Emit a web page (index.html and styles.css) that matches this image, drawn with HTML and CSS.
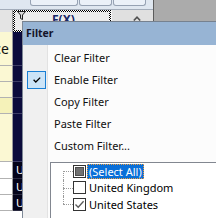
FILE: index.html
```html
<!DOCTYPE html>
<html>
<head>
<meta charset="utf-8">
<link rel="stylesheet" href="styles.css">
</head>
<body>
<div class="app">
  <div class="left">
    <div class="toolbar">
      <span class="tbtn w48"></span><span class="tbtn w33"></span><span class="tbtn w33"></span>
    </div>
    <div class="hdr">
      <div class="ca hcell"></div>
      <div class="hsel">
        <svg class="funnel" width="9" height="9" viewBox="0 0 9 9"><path d="M0.5 0.5 H8.5 L5.5 4 V8.5 L3.5 7.5 V4 Z" fill="#d8d8d8" stroke="#1e1e1e" stroke-width="1"/></svg>
        <span class="fx">F(X)</span>
      </div>
      <div class="hc"><svg width="8" height="5" viewBox="0 0 8 5"><path d="M0.8 4.5 L4 1.2 L7.2 4.5" fill="none" stroke="#505050" stroke-width="1.6"/></svg></div>
    </div>
    <div class="row h34"><div class="ca yel txt"><span>Balance</span></div><div class="cb nav"></div><div class="cc"></div></div>
    <div class="row h16"><div class="ca yel"></div><div class="cb nav"></div><div class="cc"></div></div>
    <div class="row h16"><div class="ca yel"></div><div class="cb nav"></div><div class="cc"></div></div>
    <div class="row h16"><div class="ca yel2"></div><div class="cb nav"></div><div class="cc"></div></div>
    <div class="row h48"><div class="ca yel"></div><div class="cb nav"></div><div class="cc"></div></div>
    <div class="row h17"><div class="ca"></div><div class="cb dark"><span class="clip">United Kingdom</span></div><div class="cc"></div></div>
    <div class="row h16"><div class="ca"></div><div class="cb dark"><span class="clip">United States</span></div><div class="cc"></div></div>
    <div class="row h16"><div class="ca"></div><div class="cb dark"><span class="clip">United States</span></div><div class="cc"></div></div>
  </div>
  <div class="rest"></div>
</div>

<div class="popup">
  <div class="ptitle">Filter</div>
  <div class="pbody">
    <div class="gutter">
      <div class="gslot"></div>
      <div class="gslot"><span class="mcheck"><svg width="8" height="6" viewBox="0 0 8 6"><path d="M0.6 2.8 L2.8 5 L7.2 0.6" fill="none" stroke="#000" stroke-width="1.3"/></svg></span></div>
      <div class="gslot"></div>
      <div class="gslot"></div>
      <div class="gslot"></div>
    </div>
    <div class="pcontent">
      <div class="mi">Clear Filter</div>
      <div class="mi">Enable Filter</div>
      <div class="mi">Copy Filter</div>
      <div class="mi">Paste Filter</div>
      <div class="mi">Custom Filter...</div>
      <div class="listbox">
        <div class="li first"><span class="tl"></span><span class="cbx"><span class="ind"></span></span><span class="lbl sel">(Select All)</span></div>
        <div class="li"><span class="tl"></span><span class="cbx"></span><span class="lbl">United Kingdom</span></div>
        <div class="li last"><span class="tl"></span><span class="cbx"><svg width="11" height="11" viewBox="0 0 11 11"><path d="M1.5 5.5 L4.2 8.3 L9.6 2.2" fill="none" stroke="#5a5a5a" stroke-width="1.3"/></svg></span><span class="lbl">United States</span></div>
      </div>
    </div>
  </div>
</div>
</body>
</html>
```

FILE: styles.css
```css
* { box-sizing: border-box; margin: 0; padding: 0; }
html, body { width: 216px; height: 218px; overflow: hidden; }
body {
  position: relative;
  background: #ababab;
  font-family: "Noto Sans", "Liberation Sans", sans-serif;
  font-size: 11px;
  color: #000;
}
.app { display: flex; height: 218px; }
.left {
  width: 154px;
  height: 218px;
  border-right: 1px solid #5c5c5c;
  background: #fff;
  display: flex;
  flex-direction: column;
  overflow: hidden;
}
.rest { flex: 1; background: #ababab; }

.toolbar {
  height: 10px;
  flex: none;
  border-bottom: 1px solid #a3adba;
  background: #dfe7f0;
  display: flex;
  gap: 1px;
  padding-left: 30px;
  align-items: flex-start;
}
.tbtn {
  height: 6px;
  border: 1px solid #96a2b3;
  border-top: none;
  border-radius: 0 0 3px 3px;
  background: #ebf1f8;
}
.w48 { width: 48px; }
.w33 { width: 33px; }

.hdr { display: flex; height: 22px; flex: none; }
.hcell { background: #e4e4e4; }
.hsel {
  width: 98px;
  display: flex;
  align-items: flex-start;
  border: 2px solid transparent;
  background:
    linear-gradient(#ebebeb, #ebebeb) padding-box,
    repeating-conic-gradient(#000 0 25%, #fff 0 50%) 0 0 / 2px 2px border-box;
}
.funnel { margin: -1px 0 0 2px; flex: none; }
.fx {
  margin: 2px 0 0 26px;
  font-weight: bold;
  font-size: 12px;
  line-height: 12px;
  color: #1c2a6a;
}
.hc {
  width: 42px;
  background: #e0e0e0;
  border-left: 1px solid #f8f8f8;
  padding: 6px 0 0 21px;
  display: flex;
  align-items: flex-start;
}

.row { display: flex; flex: none; }
.h34 { height: 34px; }
.h16 { height: 16px; }
.h17 { height: 17px; }
.h48 { height: 48px; }
.ca {
  width: 13px;
  flex: none;
  border-right: 1px solid #9a9a9a;
  border-bottom: 1px solid #b2b2b2;
  background: #fff;
}
.hdr .ca { border-bottom: none; background: #e4e4e4; }
.yel { background: #fbf8d3; }
.yel2 { background: #f5f2b9; }
.txt {
  display: flex;
  justify-content: flex-end;
  align-items: center;
  overflow: hidden;
  padding-right: 3px;
  font-size: 14px;
  white-space: nowrap;
  color: #111;
}
.cb {
  width: 98px;
  flex: none;
  border-bottom: 1px solid #3e3e66;
}
.nav { background: #0c0c3c; }
.dark {
  background: #03031a;
  border-bottom-color: #2a2a40;
  color: #fff;
  padding-left: 3px;
  font-size: 11px;
  line-height: 15px;
}
.clip {
  display: block;
  width: 6px;
  overflow: hidden;
  white-space: nowrap;
}
.cc { width: 42px; flex: none; border-bottom: 1px solid #c8c8c8; }

/* popup menu */
.popup {
  position: absolute;
  left: 22px;
  top: 21px;
  right: 0;
  bottom: 0;
  border-top: 1px solid #76818f;
  border-left: 1px solid #7e8896;
  background: #fcfcfc;
  display: flex;
  flex-direction: column;
  overflow: hidden;
}
.ptitle {
  height: 23px;
  flex: none;
  background: #97b4d4;
  padding-left: 3px;
  font-weight: bold;
  font-size: 10.5px;
  line-height: 23px;
  color: #14142a;
}
.pbody { display: flex; flex: 1; }
.gutter {
  width: 25px;
  flex: none;
  background: #f0f0f0;
  border-right: 1px solid #e2e2e2;
  padding-top: 2px;
}
.gslot { height: 22px; display: flex; align-items: center; padding-left: 4px; }
.mcheck {
  width: 19px;
  height: 18px;
  border: 1px solid #1a7fd4;
  background: #cce4f7;
  display: flex;
  align-items: center;
  justify-content: center;
}
.pcontent {
  flex: 1;
  padding-top: 2px;
  background: #fcfcfc;
  display: flex;
  flex-direction: column;
}
.mi {
  height: 22px;
  flex: none;
  line-height: 22px;
  padding-left: 6px;
  white-space: nowrap;
  color: #101010;
}
.listbox {
  margin: 5px 0 0 2px;
  flex: 1;
  border: 1px solid #828790;
  border-right: none;
  border-bottom: none;
  background: #fff;
  padding-left: 12px;
}
.li {
  height: 16.5px;
  display: flex;
  align-items: center;
  white-space: nowrap;
}
.tl { width: 10px; align-self: stretch; position: relative; flex: none; }
.tl::before {
  content: "";
  position: absolute;
  left: 0; top: 0; bottom: 0;
  border-left: 1px dotted #9a9a9a;
}
.tl::after {
  content: "";
  position: absolute;
  left: 0; right: 0; top: 50%;
  border-top: 1px dotted #9a9a9a;
}
.first .tl::before { top: 50%; }
.last .tl::before { bottom: 50%; }
.cbx {
  width: 13px;
  height: 13px;
  flex: none;
  border: 1px solid #333;
  background: #fff;
  display: flex;
  align-items: center;
  justify-content: center;
}
.ind { width: 9px; height: 9px; background: #707070; border: 1px solid #4e4e4e; }
.lbl {
  margin-left: 1px;
  border: 1px solid transparent;
  padding: 0 1px;
  line-height: 13px;
  color: #000;
}
.sel {
  background: #0a6fd8;
  color: #fff;
  border: 1px dotted #f0a040;
}
```
